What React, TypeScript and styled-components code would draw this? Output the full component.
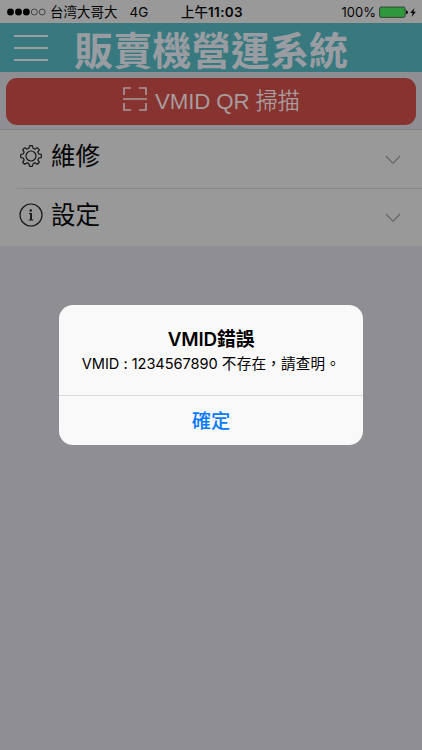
import React from "react";
import styled, { createGlobalStyle } from "styled-components";

const Global = createGlobalStyle`
  * { box-sizing: border-box; }
  html, body { margin: 0; background: #8e8e93; }
  body { font-family: Inter, "Noto Sans CJK TC", sans-serif; color: #050505; overflow: hidden; }
`;

const Screen = styled.div`
  display: flex;
  flex-direction: column;
  position: relative;
  width: 422px;
  height: 750px;
  background: #8e8e93;
`;

const StatusBar = styled.div`
  display: grid;
  grid-template-columns: 1fr auto 1fr;
  align-items: center;
  height: 23px;
  padding: 1px 5px 0 7px;
  background: #999999;
  font-size: 13.5px;
  line-height: 22px;
  white-space: nowrap;
`;

const StatusLeft = styled.div`
  display: flex;
  align-items: center;
`;

const StatusRight = styled(StatusLeft)`
  justify-content: flex-end;
  font-size: 13px;
`;

const Signal = styled.svg`
  display: block;
  width: 39px;
  height: 8px;
  margin-right: 4px;
`;

const Carrier = styled.span`
  font-family: Inter, "Noto Sans CJK SC", sans-serif;
  margin-right: 12px;
`;

const Clock = styled.span`
  font-weight: 600;
  font-size: 13.5px;
  letter-spacing: 0.35px;
  span { font-weight: 500; letter-spacing: 0; }
`;

const BatteryIcon = styled.svg`
  display: block;
  width: 38px;
  height: 14px;
  margin-left: 3px;
  margin-top: -1px;
`;

const Header = styled.header`
  display: flex;
  align-items: center;
  height: 49px;
  padding-left: 14px;
  background: #38787f;
`;

const MenuButton = styled.button`
  display: flex;
  flex-direction: column;
  justify-content: space-between;
  width: 34px;
  height: 26px;
  padding: 0;
  border: 0;
  background: none;
`;

const MenuLine = styled.span`
  height: 2px;
  background: #999ca1;
`;

const Title = styled.h1`
  margin: 5px 0 0 26px;
  font-size: 39.2px;
  line-height: 49px;
  font-weight: 700;
  color: #999ca1;
  white-space: nowrap;
`;

const ScanArea = styled.div`
  height: 58px;
  padding: 6px 6px 5px;
  border-bottom: 1px solid #838387;
`;

const ScanButton = styled.button`
  display: flex;
  align-items: center;
  width: 100%;
  height: 47px;
  padding: 0 0 0 117px;
  border: 0;
  border-radius: 11px;
  background: #87332f;
  color: #a99c9e;
  white-space: nowrap;
`;

const ScanLabel = styled.span`
  margin-top: 1px;
  font-family: "Liberation Sans", "Noto Sans CJK TC", sans-serif;
  font-size: 22.3px;
  line-height: 32px;
  font-weight: 350;
  letter-spacing: -0.15px;
`;

const ScanIcon = styled.svg`
  width: 24px;
  height: 24px;
  margin-right: 8px;
  margin-top: -5px;
`;

const List = styled.div`
  display: flex;
  flex-direction: column;
  height: 116px;
  background: #999999;
`;

const Row = styled.div`
  display: flex;
  align-items: center;
  height: 58px;
  margin-left: 17px;
  padding: 0 21px 0 2px;
  & + & { border-top: 1px solid #89898c; }
`;

const RowIcon = styled.svg`
  width: 24px;
  height: 24px;
  margin-top: -6px;
`;

const RowLabel = styled.span`
  flex: 1;
  margin: -6px 0 0 8px;
  font-size: 24.5px;
  line-height: 36px;
  font-weight: 400;
`;

const Chevron = styled.svg`
  width: 16px;
  height: 10px;
  margin-top: 1px;
`;

const Overlay = styled.div`
  position: absolute;
  inset: 0;
  display: flex;
  justify-content: center;
  align-items: center;
`;

const Dialog = styled.section`
  display: flex;
  flex-direction: column;
  width: 304px;
  height: 140px;
  border-radius: 14px;
  background: #f9f9f9;
  overflow: hidden;
  color: #000;
  text-align: center;
`;

const DialogBody = styled.div`
  height: 90px;
  padding-top: 22px;
`;

const DialogTitle = styled.h2`
  margin: 0;
  font-size: 18.8px;
  line-height: 25px;
  font-weight: 600;
  letter-spacing: -0.1px;
`;

const Message = styled.p`
  margin: 0;
  font-size: 14.6px;
  line-height: 25px;
  letter-spacing: -0.04px;
  white-space: nowrap;
  span { letter-spacing: 0.2px; }
`;

const Confirm = styled.button`
  height: 50px;
  padding: 0 0 2px;
  border: 0;
  border-top: 1px solid #dadade;
  background: none;
  color: #087aff;
  font-family: "Noto Sans CJK TC", sans-serif;
  font-size: 19.3px;
  font-weight: 500;
`;

const GEAR = (() => {
  const points: string[] = [];
  const teeth = 8;
  for (let i = 0; i < teeth; i++) {
    const base = (i * 2 * Math.PI) / teeth - Math.PI / 2;
    const at = (r: number, a: number) =>
      `${(12 + r * Math.cos(base + a)).toFixed(2)} ${(12 + r * Math.sin(base + a)).toFixed(2)}`;
    points.push(
      `${i ? "L" : "M"}${at(8.1, -0.25)} L${at(10.3, -0.15)} Q${at(10.7, 0)} ${at(10.3, 0.15)} L${at(8.1, 0.25)} Q${at(7.6, 0.39)} ${at(8.1, 0.535)}`
    );
  }
  return points.join(" ") + "Z";
})();

const GearIcon = () => (
  <RowIcon viewBox="0 0 24 24" fill="none" stroke="#171717" strokeWidth="1.2" strokeLinejoin="round">
    <path d={GEAR} />
    <circle cx="12" cy="12" r="5" />
  </RowIcon>
);

const InfoIcon = () => (
  <RowIcon viewBox="0 0 24 24" fill="none" stroke="#171717" strokeWidth="1.2">
    <circle cx="12" cy="12" r="11" />
    <circle cx="11.8" cy="7.5" r="1.2" fill="#171717" stroke="none" />
    <path d="M10 10.5h2v6.3" strokeWidth="1" />
    <path d="M12 10v7" strokeWidth="1.8" />
    <path d="M9.8 17h4.6" strokeWidth="1" />
  </RowIcon>
);

const Down = () => (
  <Chevron viewBox="0 0 16 10" fill="none" stroke="#67676a" strokeWidth="1.3">
    <path d="M1 1l7 7.4L15 1" />
  </Chevron>
);

export default function App() {
  return (
    <>
      <Global />
      <Screen>
        <StatusBar>
          <StatusLeft>
            <Signal viewBox="0 0 39 8">
              {[3.5, 11.5, 19.4, 27.3, 35.2].map((x, i) => (
                <circle key={x} cx={x} cy="4" r={i < 3 ? 3.4 : 3} fill={i < 3 ? "#000" : "none"} stroke={i < 3 ? "none" : "#222"} strokeWidth="0.7" />
              ))}
            </Signal>
            <Carrier>台湾大哥大</Carrier>
            <span>4G</span>
          </StatusLeft>
          <Clock><span>上午</span>11:03</Clock>
          <StatusRight>
            <span>100%</span>
            <BatteryIcon viewBox="0 0 38 14">
              <rect x="0.6" y="2" width="25.6" height="10.4" rx="1.7" fill="#2f983d" stroke="#222" strokeWidth="0.7" />
              <path d="M27 5.2q2 0.4 2 2t-2 2z" fill="#000" />
              <path d="M35.5 3l-4.2 5h2.4l-1.2 4 4.4-5.2h-2.5z" fill="#000" />
            </BatteryIcon>
          </StatusRight>
        </StatusBar>
        <Header>
          <MenuButton aria-label="選單">
            <MenuLine />
            <MenuLine />
            <MenuLine />
          </MenuButton>
          <Title>販賣機營運系統</Title>
        </Header>
        <ScanArea>
          <ScanButton>
            <ScanIcon viewBox="0 0 24 24" fill="none" stroke="#a99c9e" strokeWidth="1.6">
              <path d="M1 8V1h7M16 1h7v7M1 16v7h7M16 23h7v-7M0 12h24" />
            </ScanIcon>
            <ScanLabel>VMID QR 掃描</ScanLabel>
          </ScanButton>
        </ScanArea>
        <List>
          <Row>
            <GearIcon />
            <RowLabel>維修</RowLabel>
            <Down />
          </Row>
          <Row>
            <InfoIcon />
            <RowLabel>設定</RowLabel>
            <Down />
          </Row>
        </List>
        <Overlay>
          <Dialog role="alertdialog">
            <DialogBody>
              <DialogTitle>VMID錯誤</DialogTitle>
              <Message>VMID : 1234567890 <span>不存在，請查明。</span></Message>
            </DialogBody>
            <Confirm>確定</Confirm>
          </Dialog>
        </Overlay>
      </Screen>
    </>
  );
}
